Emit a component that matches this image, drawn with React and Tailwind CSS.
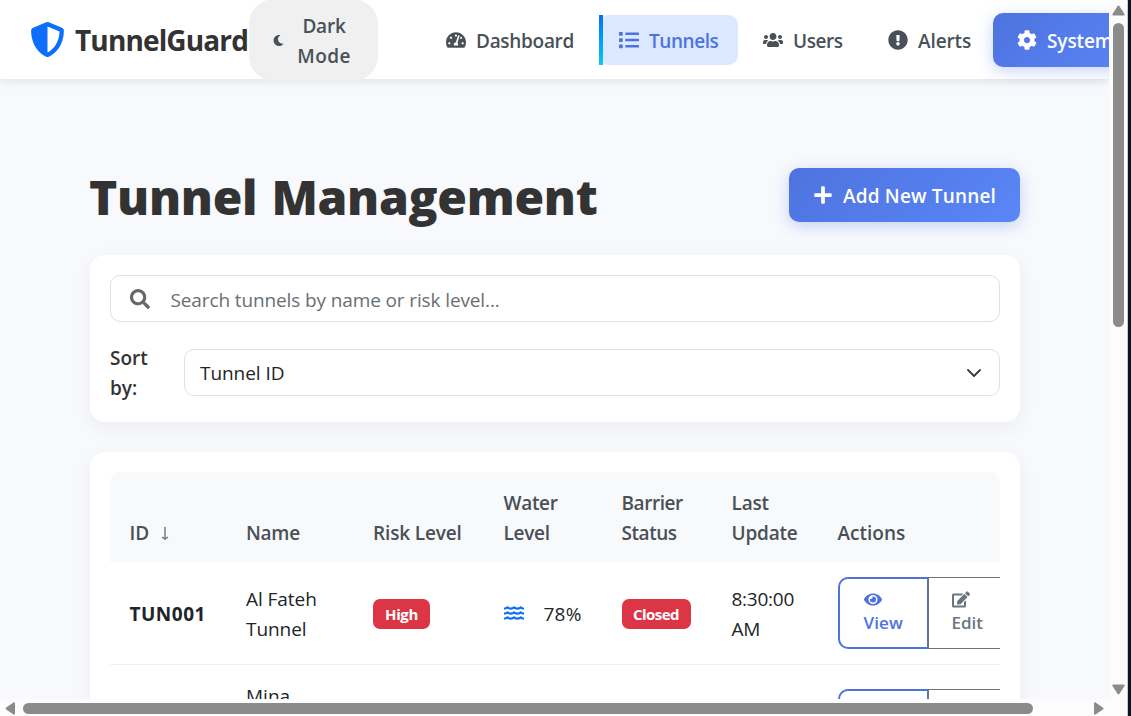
import {
  FaCog,
  FaEdit,
  FaExclamationCircle,
  FaEye,
  FaList,
  FaMoon,
  FaPlus,
  FaSearch,
  FaShieldAlt,
  FaTachometerAlt,
  FaUsers,
  FaWater,
} from "react-icons/fa";

const columns = "grid grid-cols-[117px_127px_130px_118px_110px_106px_240px] pl-[19.5px]";

function Navbar() {
  return (
    <nav className="relative z-10 flex h-[79px] shrink-0 items-center bg-white pl-[30px] text-[19px] font-semibold whitespace-nowrap text-[#495057] shadow-[0_2px_10px_rgba(0,0,0,0.1)]">
      <FaShieldAlt className="mr-[10px] size-[35px] shrink-0 text-[#0d6efd]" />
      <span className="w-[174px] shrink-0 pt-px text-[28px] font-bold tracking-[-0.86px] text-[#333]">TunnelGuard</span>
      <button className="mt-px flex h-[82px] w-[129px] shrink-0 items-center rounded-[25px] bg-[#f0f0f0] pl-[24px]">
        <FaMoon className="size-[11px]" />
        <span className="ml-[7px] w-[66px] pt-[2px] text-center leading-[30px]">
          <span className="block tracking-[-0.2px]">Dark</span>
          <span className="block tracking-[0.4px]">Mode</span>
        </span>
      </button>
      <a className="ml-[68px] flex w-[153px] shrink-0 items-center">
        <FaTachometerAlt className="mr-[10px] size-[20px]" />
        <span className="pt-[3px] tracking-[-0.3px]">Dashboard</span>
      </a>
      <a className="relative flex h-[50px] w-[139px] shrink-0 items-center rounded-[10px] bg-[#dbe8ff] pl-[20px] text-[#4e73df]">
        <span className="absolute inset-y-0 left-0 w-[4px] bg-linear-to-b from-[#0d6efd] to-[#0dcaf0]" />
        <FaList className="mr-[10px] size-[20px]" />
        <span className="pt-[3px] tracking-[-0.45px]">Tunnels</span>
      </a>
      <a className="ml-[25px] flex w-[125px] shrink-0 items-center">
        <FaUsers className="mr-[10px] size-[20px]" />
        <span className="pt-[3px] tracking-[-0.45px]">Users</span>
      </a>
      <a className="flex w-[105px] shrink-0 items-center">
        <FaExclamationCircle className="mr-[10px] size-[20px]" />
        <span className="pt-[3px] tracking-[-0.1px]">Alerts</span>
      </a>
      <button className="mt-px flex h-[54px] w-[160px] shrink-0 items-center rounded-[10px] bg-linear-[135deg] from-[#4e73df] to-[#5a86f7] pl-[24px] text-white shadow-[0_4px_15px_rgba(78,115,223,0.3)]">
        <FaCog className="mr-[10px] size-[20px]" />
        <span className="pt-[3px] font-semibold tracking-[-0.1px]">System</span>
      </button>
    </nav>
  );
}

function Filters() {
  return (
    <section className="mt-[33px] h-[167px] rounded-[15px] bg-white p-5 shadow-[0_5px_20px_rgba(0,0,0,0.05)]">
      <div className="flex h-[47px] items-center rounded-[10px] border border-[#dee2e6] pl-[19px]">
        <FaSearch className="size-[20px] text-[#666]" />
        <span className="ml-[20.5px] pt-[3px] tracking-[-0.12px] text-[#6a6e72]">Search tunnels by name or risk level...</span>
      </div>
      <div className="mt-5 flex h-[61px] items-center">
        <label className="w-[74px] pt-px leading-[30px] font-semibold text-[#333]">
          Sort
          <br />
          by:
        </label>
        <div className="flex h-[47px] flex-1 items-center justify-between rounded-[10px] border border-[#dee2e6] pr-[17px] pl-[15px]">
          <span className="pt-px tracking-[-0.05px]">Tunnel ID</span>
          <svg className="size-4" viewBox="0 0 16 16" fill="none">
            <path d="m2 5 6 6 6-6" stroke="#343a40" strokeWidth="1.8" strokeLinecap="round" strokeLinejoin="round" />
          </svg>
        </div>
      </div>
    </section>
  );
}

function RowActions() {
  return (
    <div className="flex h-[72px] text-[17px] leading-[23px] font-semibold">
      <button className="flex w-[91px] flex-col justify-center rounded-l-[10px] border-2 border-[#4e73df] pb-[2px] pl-[24px] text-left text-[#4e73df]">
        <FaEye className="h-[19px] w-[18px]" />
        <span className="pt-[2px] tracking-[0.1px]">View</span>
      </button>
      <button className="-ml-px flex w-[100px] flex-col justify-center border border-[#6c757d] pb-[2px] pl-[23px] text-left text-[#6c757d]">
        <FaEdit className="h-[19px] w-[18px]" />
        <span className="pt-[2px] tracking-[0px]">Edit</span>
      </button>
    </div>
  );
}

function TunnelTable() {
  return (
    <section className="mt-[30px] h-[500px] shrink-0 rounded-[15px] bg-white p-5 shadow-[0_5px_20px_rgba(0,0,0,0.05)]">
      <div className="overflow-hidden rounded-t-[10px]">
        <div className={`${columns} h-[90px] items-end bg-[#f8f9fb] pb-[14px] leading-[30px] font-semibold text-[#495057]`}>
          <span className="flex items-center">
            ID
            <svg className="mt-px ml-[12px] h-[13px] w-[8px]" viewBox="0 0 8 13" fill="none" stroke="#777c82" strokeWidth="1.5">
              <path d="M4 0v12M1 10l3 2.2 3-2.2" />
            </svg>
          </span>
          <span className="-ml-[0.5px] tracking-[-0.3px]">Name</span>
          <span className="-ml-[0.5px] tracking-[-0.15px]">Risk Level</span>
          <span className="tracking-[-0.3px]">Water<br />Level</span>
          <span className="tracking-[-0.45px]">Barrier<br />Status</span>
          <span className="tracking-[-0.2px]">Last<br />Update</span>
          <span className="tracking-[0px]">Actions</span>
        </div>
        <div className={`${columns} h-[103px] items-center border-b border-[#f0f0f0] leading-[30px]`}>
          <span className="pt-px font-bold tracking-[0.5px]">TUN001</span>
          <span className="-ml-[0.5px] pt-px tracking-[-0.05px]">Al Fateh<br />Tunnel</span>
          <span className="mt-px -ml-[0.5px] flex h-[30px] w-[57px] items-center justify-center rounded-[7px] bg-[#dc3545] pt-px text-[15px] font-bold tracking-[-0.35px] text-white">
            High
          </span>
          <span className="flex items-center">
            <FaWater className="size-[20px] text-[#0d6efd]" />
            <span className="ml-[20px] pt-px tracking-[0.2px]">78%</span>
          </span>
          <span className="mt-px flex h-[30px] w-[69px] items-center justify-center rounded-[7px] bg-[#dc3545] pt-px text-[15px] font-bold tracking-[-0.55px] text-white">
            Closed
          </span>
          <span className="pt-px tracking-[-0.25px]">8:30:00<br />AM</span>
          <RowActions />
        </div>
        <div className={`${columns} h-[120px] items-center leading-[30px]`}>
          <span />
          <span className="-ml-[0.5px] h-[90px] pt-px">Mina</span>
          <span />
          <span />
          <span />
          <span />
          <RowActions />
        </div>
      </div>
    </section>
  );
}

function VerticalScrollbar() {
  return (
    <div className="flex w-[19px] shrink-0 flex-col items-center border-r border-[#c8cace] bg-[#fcfcfc]">
      <svg className="mt-[5px] h-[11px] w-[13px]" viewBox="0 0 13 11">
        <path d="M5.5 1.2q1-1.4 2 0l5 7.8q.6 1.5-1 1.5h-10q-1.6 0-1-1.5z" fill="#8b8b8b" />
      </svg>
      <div className="mt-[7px] h-[304px] w-[11px] rounded-full bg-[#8b8b8b]" />
      <svg className="mt-auto mb-[21px] h-[11px] w-[13px]" viewBox="0 0 13 11">
        <path d="M5.5 9.8q1 1.4 2 0l5-7.8q.6-1.5-1-1.5h-10q-1.6 0-1 1.5z" fill="#8b8b8b" />
      </svg>
    </div>
  );
}

function HorizontalScrollbar() {
  return (
    <div className="flex h-[17px] shrink-0 items-center bg-[#fcfcfc] pt-[2px]">
      <svg className="ml-[5px] h-[13px] w-[11px]" viewBox="0 0 11 13">
        <path d="M1.2 5.5q-1.4 1 0 2l7.3 5q1.5.6 1.5-1v-10q0-1.6-1.5-1z" fill="#8b8b8b" />
      </svg>
      <div className="ml-[7px] h-[11px] w-[1010px] rounded-full bg-[#8b8b8b]" />
      <svg className="ml-auto mr-[5px] h-[13px] w-[11px]" viewBox="0 0 11 13">
        <path d="M9.8 5.5q1.4 1 0 2l-7.3 5q-1.5.6-1.5-1v-10q0-1.6 1.5-1z" fill="#8b8b8b" />
      </svg>
    </div>
  );
}

export default function App() {
  return (
    <div className="flex h-[716px] w-[1131px] overflow-hidden bg-[#0b1426] font-['Open_Sans','Noto_Sans',sans-serif] text-[19px] text-[#212529]">
      <div className="flex w-[1109px] shrink-0 flex-col">
        <div className="flex h-[699px] flex-col overflow-hidden bg-[#f8f9fd]">
          <Navbar />
          <main className="flex flex-col pt-[89px] pr-[89px] pl-[90px]">
            <header className="flex h-[54px] items-center justify-between">
              <h1 className="-ml-px pt-[3px] text-[48px] leading-[54px] font-extrabold tracking-[-0.3px] whitespace-nowrap text-[#333] [word-spacing:2px]">
                Tunnel Management
              </h1>
              <button className="flex h-[54px] w-[231px] items-center rounded-[10px] bg-linear-[135deg] from-[#4e73df] to-[#5a86f7] pl-[24px] font-semibold text-white shadow-[0_4px_15px_rgba(78,115,223,0.3)]">
                <FaPlus className="mr-[10px] size-[20px]" />
                <span className="pt-[3px] tracking-[0.17px] whitespace-nowrap">Add New Tunnel</span>
              </button>
            </header>
            <Filters />
            <TunnelTable />
          </main>
        </div>
        <HorizontalScrollbar />
      </div>
      <VerticalScrollbar />
    </div>
  );
}
